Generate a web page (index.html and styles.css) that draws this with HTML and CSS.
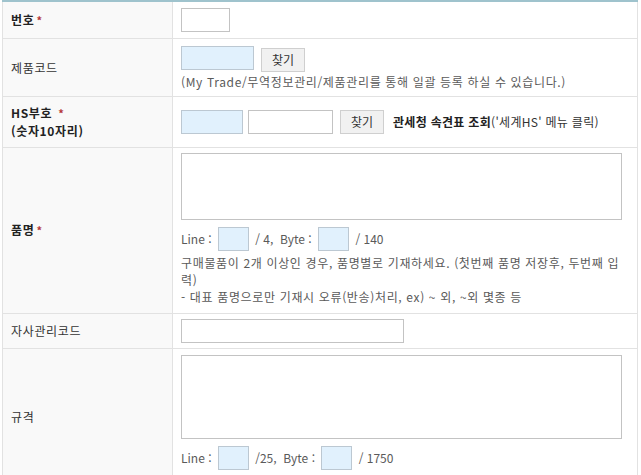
FILE: index.html
```html
<!DOCTYPE html>
<html lang="ko">
<head>
<meta charset="utf-8">
<link rel="stylesheet" href="styles.css">
</head>
<body>
<table class="form">
  <tr class="r1">
    <th class="bold">번호<span class="req">*</span></th>
    <td><input class="in w48" type="text"></td>
  </tr>
  <tr class="r2">
    <th>제품코드</th>
    <td>
      <div class="line"><input class="in blue w72" type="text"><button class="btn">찾기</button></div>
      <div class="note">(My Trade/무역정보관리/제품관리를 통해 일괄 등록 하실 수 있습니다.)</div>
    </td>
  </tr>
  <tr class="r3">
    <th class="bold">HS부호 <span class="req">*</span><br>(숫자10자리)</th>
    <td>
      <div class="line"><input class="in blue w61" type="text"><input class="in w84 gap5" type="text"><button class="btn">찾기</button><span class="hs"><b>관세청 속견표 조회</b>('세계HS' 메뉴 클릭)</span></div>
    </td>
  </tr>
  <tr class="r4">
    <th class="bold">품명<span class="req">*</span></th>
    <td>
      <textarea class="ta ta1"></textarea>
      <div class="count">Line : <input class="in blue sm" type="text"> / 4,&nbsp; Byte : <input class="in blue sm" type="text"> / 140</div>
      <div class="note">구매물품이 2개 이상인 경우, 품명별로 기재하세요. (첫번째 품명 저장후, 두번째 입력)</div>
      <div class="note">- 대표 품명으로만 기재시 오류(반송)처리, ex) ~ 외, ~외 몇종 등</div>
    </td>
  </tr>
  <tr class="r5">
    <th>자사관리코드</th>
    <td><input class="in w222" type="text"></td>
  </tr>
  <tr class="r6">
    <th>규격</th>
    <td>
      <textarea class="ta ta2"></textarea>
      <div class="count">Line : <input class="in blue sm" type="text"> /25,&nbsp; Byte : <input class="in blue sm" type="text"> / 1750</div>
    </td>
  </tr>
</table>
</body>
</html>
```

FILE: styles.css
```css
html, body {
  margin: 0;
  padding: 0;
  background: #fff;
}
body {
  font-family: "Noto Sans CJK KR", "Liberation Sans", sans-serif;
  font-size: 12px;
  color: #5a5a5a;
}
.form {
  margin-left: 2px;
  width: 636px;
  border-collapse: collapse;
  border-top: 2px solid #9fc3cd;
}
.form th, .form td {
  border: 1px solid #e2e2e2;
  border-top: 0;
  padding: 0 2px 0 8px;
  line-height: 17px;
  letter-spacing: 0.65px;
}
.form tr + tr th, .form tr + tr td {
  border-top: 1px solid #e2e2e2;
}
.form th {
  width: 161px;
  background: #f9f9f9;
  text-align: left;
  font-weight: normal;
  color: #333;
  vertical-align: middle;
  padding-left: 8px;
  padding-right: 0;
}
.form th.bold {
  font-weight: bold;
  color: #222;
}
.req {
  color: #b5373a;
  font-weight: bold;
  margin-left: 2px;
  font-size: 11px;
}
.r1 { height: 37px; }
.r2 { height: 58px; }
.r3 { height: 51px; }
.r4 { height: 166px; }
.r5 { height: 35px; }
.r6 td { padding-top: 6px; padding-bottom: 6px; vertical-align: top; }
.r6 th { padding-top: 6px; }
.r4 td { vertical-align: top; padding-top: 5px; padding-bottom: 5px; }
.in {
  box-sizing: border-box;
  height: 24px;
  border: 1px solid #c3c3c3;
  background: #fff;
  margin: 0;
  padding: 0 3px;
  vertical-align: middle;
  font: inherit;
}
.in.blue { background: #e1f1fd; border-color: #bcc8d2; }
.w48 { width: 49px; }
.w72 { width: 73px; }
.w61 { width: 62px; }
.w84 { width: 85px; }
.w222 { width: 223px; }
.sm { width: 31px; height: 24px; margin: 0 3px; }
.gap5 { margin-left: 5px; }
.line {
  display: flex;
  align-items: center;
}
.btn {
  box-sizing: border-box;
  height: 24px;
  width: 44px;
  margin-left: 7px;
  border: 1px solid #cfcfcf;
  background: #f1f1f1;
  color: #333;
  font: inherit;
  padding: 0;
}
.r2 .btn { margin-top: 3px; }
.hs {
  margin-left: 9px;
  color: #333;
  letter-spacing: 0.3px;
}
.hs b { color: #222; }
.note {
  line-height: 17px;
}
.r2 .note { margin-top: 1px; }
.ta {
  display: block;
  box-sizing: border-box;
  width: 441px;
  border: 1px solid #c3c3c3;
  background: #fff;
  margin: 0;
  resize: none;
}
.ta1 { height: 67px; }
.ta2 { height: 84px; }
.count {
  margin-top: 7px;
  display: flex;
  align-items: center;
  white-space: pre;
  height: 24px;
  margin-bottom: 3px;
  letter-spacing: 0;
}
```
